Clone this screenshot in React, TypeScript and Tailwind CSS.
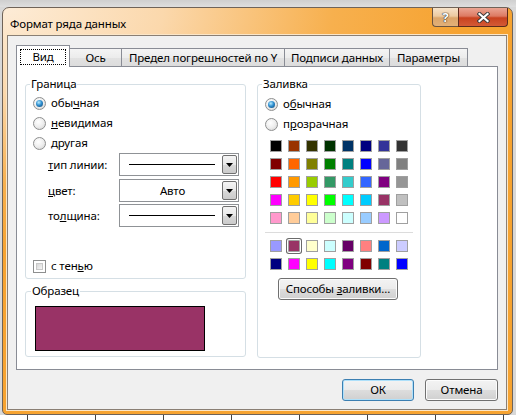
// App.tsx
//
// "Формат ряда данных" — Excel 2007 data series format dialog, Win7 Aero frame.

import type { ReactNode } from "react";
import clsx from "clsx";

const standardColors = [
  "#000000", "#993300", "#333300", "#003300", "#003366", "#000080", "#333399", "#333333",
  "#800000", "#FF6600", "#808000", "#008000", "#008080", "#0000FF", "#666699", "#808080",
  "#FF0000", "#FF9900", "#99CC00", "#339966", "#33CCCC", "#3366FF", "#800080", "#969696",
  "#FF00FF", "#FFCC00", "#FFFF00", "#00FF00", "#00FFFF", "#00CCFF", "#993366", "#C0C0C0",
  "#FF99CC", "#FFCC99", "#FFFF99", "#CCFFCC", "#CCFFFF", "#99CCFF", "#CC99FF", "#FFFFFF",
];

const chartColors = [
  "#9999FF", "#993366", "#FFFFCC", "#CCFFFF", "#660066", "#FF8080", "#0066CC", "#CCCCFF",
  "#000080", "#FF00FF", "#FFFF00", "#00FFFF", "#800080", "#800000", "#008080", "#0000FF",
];

const tabs = [
  { label: "Ось", w: "w-[53px]" },
  { label: "Предел погрешностей по Y", w: "w-[163px]" },
  { label: "Подписи данных", w: "w-[105px]" },
  { label: "Параметры", w: "w-[78px]" },
];

function Radio({ checked, children }: { checked?: boolean; children: ReactNode }) {
  return (
    <div className="flex items-center h-[20px]">
      <span className="w-[13px] h-[13px] shrink-0 rounded-full border border-[#8e8f8f] bg-[radial-gradient(circle_at_40%_35%,#ffffff_0%,#eeeeee_50%,#cfcfcf_100%)] flex items-center justify-center">
        {checked && (
          <span className="w-[7px] h-[7px] rounded-full bg-[radial-gradient(circle_at_40%_35%,#b8ecff_0%,#2f8fd0_45%,#0d3f6b_100%)]" />
        )}
      </span>
      <span className="ml-[5px]">{children}</span>
    </div>
  );
}

function DropArrow() {
  return (
    <span className="w-[15px] h-full shrink-0 rounded-[2px] border border-[#707070] bg-[linear-gradient(#f4f4f4_0%,#e8e8e8_50%,#d8d8d8_51%,#cbcbcb_100%)] flex items-center justify-center">
      <svg width="7" height="4" viewBox="0 0 7 4">
        <path d="M0 0h7L3.5 4z" fill="#000" />
      </svg>
    </span>
  );
}

function Combo({ children }: { children: ReactNode }) {
  return (
    <div className="w-[120px] h-[23px] border border-[#8f9296] bg-white flex items-center p-[1px]">
      <div className="flex-1 flex items-center justify-center">{children}</div>
      <DropArrow />
    </div>
  );
}

function Line() {
  return <span className="block w-[86px] h-px bg-black" />;
}

function Swatch({ color, selected }: { color: string; selected?: boolean }) {
  return (
    <span
      className={clsx(
        "block w-[12px] h-[12px] border border-[#a0a0a0]",
        selected && "rounded-[1px] shadow-[0_0_0_1px_#ffffff,0_0_0_2px_#6b6b6b]"
      )}
      style={{ backgroundColor: color }}
    />
  );
}

function Button({ children, focused, className }: { children: ReactNode; focused?: boolean; className?: string }) {
  return (
    <button
      type="button"
      className={clsx(
        "h-[22px] rounded-[3px] border flex items-center justify-center text-black bg-[linear-gradient(#f3f3f3_0%,#ebebeb_50%,#dddddd_51%,#d0d0d0_100%)]",
        focused
          ? "border-[#3c7fb1] shadow-[inset_0_0_0_1px_#aee0fa]"
          : "border-[#707070] shadow-[inset_0_0_0_1px_#fcfcfc]",
        className
      )}
    >
      <span>{children}</span>
    </button>
  );
}

export default function App() {
  return (
    <div className="w-[516px] h-[420px] overflow-hidden flex flex-col bg-[#d8d8d8] font-['Noto_Sans','Segoe_UI','Liberation_Sans',sans-serif] text-[11.5px] tracking-[-0.15px] leading-[16px] text-black">
      <div className="h-[7px] bg-[linear-gradient(#cfcfcf,#dedede)]" />

      {/* window */}
      <div className="ml-[2px] w-[511px] h-[408px] rounded-t-[7px] rounded-b-[5px] border border-[#6f6358] bg-[radial-gradient(ellipse_90%_60%_at_0%_0%,#fdecd7_0%,#fbd8ac_35%,#f7b04e_72%,#f6a331_100%)] flex flex-col">
        {/* title bar */}
        <div className="h-[27px] flex items-start pl-[7px] pr-[4px]">
          <span className="mt-[8px] text-[11.5px] leading-[16px] text-black">Формат ряда данных</span>
          <div className="ml-auto flex">
            <span className="w-[26px] h-[19px] rounded-bl-[4px] border border-r-0 border-t-0 border-[#6b5440] bg-[linear-gradient(#f6e2c9_0%,#eccaa0_45%,#dca66a_55%,#e2b078_100%)] flex items-center justify-center font-bold text-[13px] text-white [text-shadow:0_0_1px_#333,0_0_1px_#333,0_0_1px_#333]">
              ?
            </span>
            <span className="w-[50px] h-[19px] rounded-br-[4px] border border-t-0 border-[#5c2a1c] bg-[linear-gradient(#eba593_0%,#dd7a62_45%,#c9421f_55%,#d45a36_100%)] flex items-center justify-center">
              <svg width="13" height="11" viewBox="0 0 13 11">
                <path d="M2.5 2L10.5 9M10.5 2L2.5 9" stroke="#3a3a3a" strokeWidth="4" strokeLinecap="square" />
                <path d="M2.5 2L10.5 9M10.5 2L2.5 9" stroke="#ffffff" strokeWidth="2.2" strokeLinecap="square" />
              </svg>
            </span>
          </div>
        </div>

        {/* client area */}
        <div className="ml-[4px] w-[500px] h-[375px] border border-[#8a7f74] shadow-[0_0_0_1px_#fbe6c8] bg-[#f0f0f0] pt-[9px] px-[8px]">
          {/* tabs */}
          <div className="flex items-end h-[21px]">
            <div className="relative z-10 w-[54px] h-[22px] -mb-px border-x border-t border-[#898c95] bg-white flex items-start justify-center pt-[3px]">
              <span className="w-[46px] h-[16px] border border-dotted border-black flex items-center justify-center">Вид</span>
            </div>
            {tabs.map((t, i) => (
              <div
                key={t.label}
                className={clsx(
                  "h-[18px] border-t border-r border-[#898c95] bg-[linear-gradient(#f4f4f4_0%,#ececec_50%,#e2e2e2_51%,#dcdcdc_100%)] flex items-center justify-center whitespace-nowrap",
                  t.w,
                  i === 0 && "-ml-px border-l"
                )}
              >
                {t.label}
              </div>
            ))}
          </div>

          {/* panel */}
          <div className="h-[304px] border border-[#898c95] bg-white pt-[9px] pl-[8px] flex gap-[11px]">
            <div className="w-[221px] flex flex-col gap-[4px]">
              <fieldset className="h-[203px] border border-[#d5dfe5] rounded-[3px] px-0">
                <legend className="ml-[4px] px-[1px]">Граница</legend>
                <div className="pt-[1px] pl-[7px]">
                  <Radio checked>
                    обы<u>ч</u>ная
                  </Radio>
                  <Radio>
                    <u>н</u>евидимая
                  </Radio>
                  <Radio>другая</Radio>
                </div>
                <div className="pl-[22px] flex flex-col gap-[2px]">
                  <div className="flex items-center">
                    <span className="w-[71px]">
                      <u>т</u>ип линии:
                    </span>
                    <Combo>
                      <Line />
                    </Combo>
                  </div>
                  <div className="flex items-center mt-[1px]">
                    <span className="w-[71px]">
                      <u>ц</u>вет:
                    </span>
                    <Combo>
                      <span className="ml-[2px]">Авто</span>
                    </Combo>
                  </div>
                  <div className="flex items-center">
                    <span className="w-[71px]">
                      то<u>л</u>щина:
                    </span>
                    <Combo>
                      <Line />
                    </Combo>
                  </div>
                </div>
                <div className="mt-[32px] pl-[7px] flex items-center h-[14px]">
                  <span className="w-[13px] h-[13px] border border-[#8e8f8f] bg-white p-[2px]">
                    <span className="block w-full h-full border border-[#c8c8c8] bg-[linear-gradient(135deg,#d6d6d6,#f6f6f6)]" />
                  </span>
                  <span className="ml-[5px]">
                    с тен<u>ь</u>ю
                  </span>
                </div>
              </fieldset>

              <fieldset className="h-[74px] border border-[#d5dfe5] rounded-[3px] px-0">
                <legend className="ml-[5px] px-[1px]">Образец</legend>
                <div className="ml-[9px] mt-[7px] w-[170px] h-[45px] border border-black bg-[#993366]" />
              </fieldset>
            </div>

            <fieldset className="w-[164px] h-[282px] border border-[#d5dfe5] rounded-[3px] px-0">
              <legend className="ml-[4px] px-[1px]">Заливка</legend>
              <div className="pt-[2px] pl-[7px]">
                <Radio checked>
                  о<u>б</u>ычная
                </Radio>
                <Radio>
                  п<u>р</u>озрачная
                </Radio>
              </div>
              <div className="mt-[6px] pl-[12px] grid grid-cols-[repeat(8,12px)] gap-[6px]">
                {standardColors.map((c, i) => (
                  <Swatch key={i} color={c} />
                ))}
              </div>
              <div className="mt-[8px] ml-[7px] w-[148px] h-px bg-[#dcdcdc]" />
              <div className="mt-[7px] pl-[12px] grid grid-cols-[repeat(8,12px)] gap-[6px]">
                {chartColors.map((c, i) => (
                  <Swatch key={i} color={c} selected={i === 1} />
                ))}
              </div>
              <Button className="mt-[8px] ml-[20px] w-[120px]">
                Способы <u>з</u>аливки...
              </Button>
            </fieldset>
          </div>

          {/* dialog buttons */}
          <div className="mt-[9px] flex justify-end gap-[11px]">
            <Button focused className="w-[72px]">
              ОК
            </Button>
            <Button className="w-[73px]">Отмена</Button>
          </div>
        </div>
      </div>

      <div className="flex-1 bg-white bg-[repeating-linear-gradient(90deg,#444_0_1px,transparent_1px_68px)] bg-[position:27px_0]" />
    </div>
  );
}
